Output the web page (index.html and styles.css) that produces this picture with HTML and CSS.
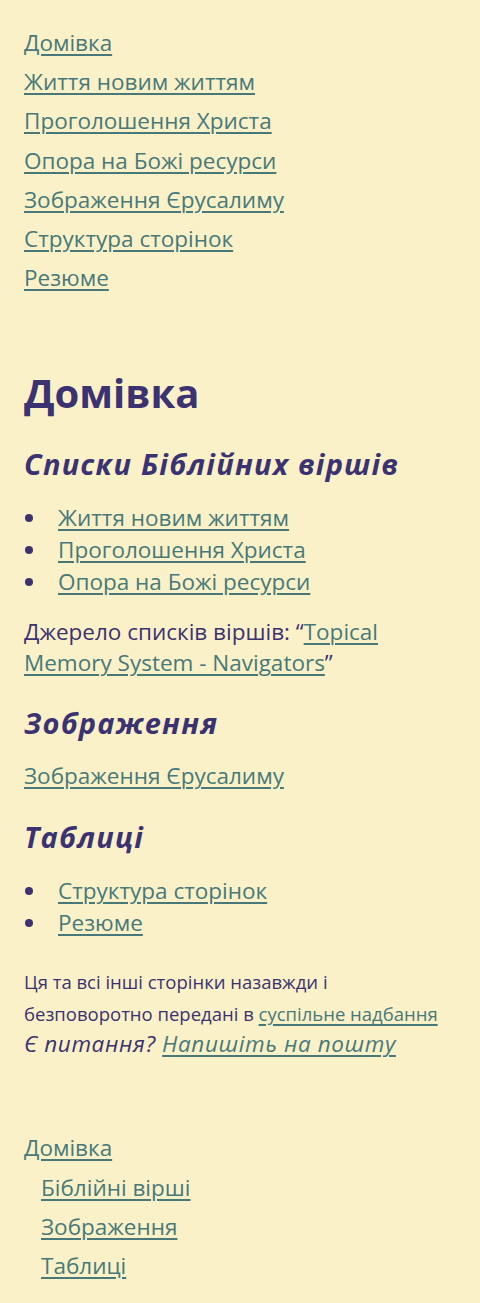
FILE: index.html
```html
<!DOCTYPE html>
<html lang="uk">
<head>
<meta charset="utf-8">
<title>Домівка</title>
<link rel="stylesheet" href="styles.css">
</head>
<body>
<nav class="top-nav">
  <a href="#">Домівка</a>
  <a href="#">Життя новим життям</a>
  <a href="#">Проголошення Христа</a>
  <a href="#">Опора на Божі ресурси</a>
  <a href="#">Зображення Єрусалиму</a>
  <a href="#">Структура сторінок</a>
  <a href="#">Резюме</a>
</nav>
<main class="content">
  <h1 class="title">Домівка</h1>
  <h2 class="section">Списки Біблійних віршів</h2>
  <ul class="list">
    <li><a href="#">Життя новим життям</a></li>
    <li><a href="#">Проголошення Христа</a></li>
    <li><a href="#">Опора на Божі ресурси</a></li>
  </ul>
  <p class="source">Джерело списків віршів: “<a href="#">Topical Memory System - Navigators</a>”</p>
  <h2 class="section">Зображення</h2>
  <p class="single"><a href="#">Зображення Єрусалиму</a></p>
  <h2 class="section">Таблиці</h2>
  <ul class="list">
    <li><a href="#">Структура сторінок</a></li>
    <li><a href="#">Резюме</a></li>
  </ul>
  <p class="license">Ця та всі інші сторінки назавжди і <span class="keep">безповоротно передані в <a href="#">суспільне надбання</a></span></p>
  <p class="question">Є питання? <a href="#">Напишіть на пошту</a></p>
</main>
<nav class="bottom-nav">
  <a href="#" class="root">Домівка</a>
  <div class="sub">
    <a href="#">Біблійні вірші</a>
    <a href="#">Зображення</a>
    <a href="#">Таблиці</a>
  </div>
</nav>
</body>
</html>
```
FILE: styles.css
```css
html { background: #fbf1c8; }
body {
  margin: 0;
  padding: 23px 24px 20px;
  font-family: "Open Sans", "Noto Sans", sans-serif;
  font-size: 22.5px;
  color: #3b3272;
  background: #fbf1c8;
}
a {
  color: #47797a;
  text-decoration: underline;
  text-decoration-thickness: 2px;
  text-underline-offset: 3px;
}

.top-nav { display: flex; flex-direction: column; align-items: flex-start; }
.top-nav a { line-height: 39.2px; }

.content { margin-top: 70px; }
.title { font-size: 40px; font-weight: 700; margin: 0; line-height: 52px; }
.section {
  font-size: 29px;
  font-weight: 700;
  font-style: italic;
  letter-spacing: 1.2px;
  margin: 25px 0 0;
  line-height: 40px;
}
.list { list-style: none; margin: 18px 0 0; padding: 0; }
.list li { display: flex; align-items: center; line-height: 32px; }
.list li::before {
  content: "";
  width: 8px;
  height: 8px;
  border-radius: 50%;
  background: #3b3272;
  margin: 0 25px 0 1px;
  flex: none;
}
.source { margin: 18px 0 0; line-height: 31px; }
.single { margin: 17px 0 0; line-height: 32px; }
.license { font-size: 18.5px; line-height: 32px; margin: 27px 0 0; }
.license .keep { white-space: nowrap; }
.question { font-style: italic; letter-spacing: 0.6px; margin: 0; line-height: 28px; }

.bottom-nav { margin-top: 70px; display: flex; flex-direction: column; align-items: flex-start; }
.bottom-nav a { line-height: 39.3px; }
.bottom-nav .sub { display: flex; flex-direction: column; align-items: flex-start; padding-left: 17px; }
```
